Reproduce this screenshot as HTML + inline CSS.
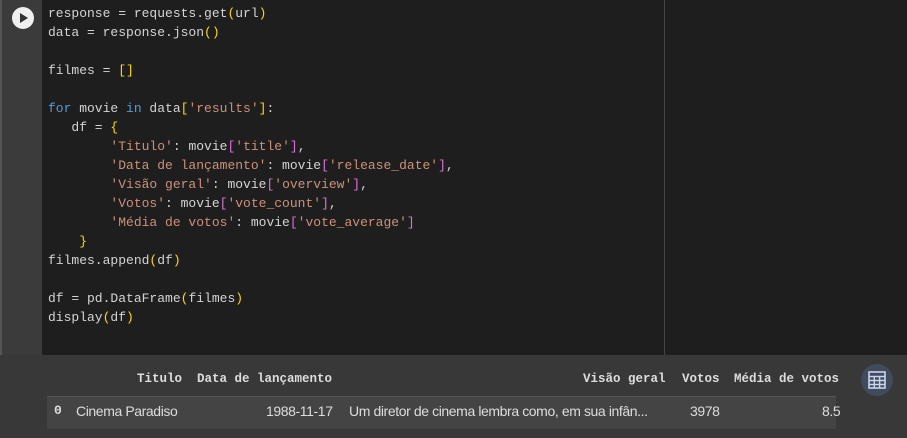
<!DOCTYPE html>
<html><head><meta charset="utf-8"><style>
body{margin:0;width:907px;height:438px;background:#383838;overflow:hidden;position:relative;font-family:"Liberation Mono",monospace}
.cell{position:absolute;left:0;top:0;width:907px;height:355px;background:#1e1e1e}
.gut{position:absolute;left:0;top:0;width:42px;height:355px;background:#3b3b3b;border-left:2px solid #555;box-sizing:border-box}
.run{position:absolute;left:10px;top:7px;width:22px;height:22px;border-radius:50%;background:#f0f0f0}
.run:after{content:"";position:absolute;left:8px;top:6px;border-left:8px solid #333;border-top:5px solid transparent;border-bottom:5px solid transparent}
.vl{position:absolute;left:664px;top:0;width:1px;height:355px;background:#444}
pre{position:absolute;left:48px;top:4px;margin:0;font-size:13px;line-height:19px;color:#d4d4d4;font-family:"Liberation Mono",monospace}
.k{color:#569cd6}.s{color:#ce9178}.y{color:#ffd700}.m{color:#da70d6}
.t{position:absolute;font-size:13px;color:#ddd;white-space:nowrap}
.h{font-weight:bold;top:372px;font-family:"Liberation Mono",monospace;font-size:12.5px;color:#ddd}
.row{position:absolute;left:47px;top:396px;width:789px;height:32px;background:#444;border-top:1px solid #555}
.d{top:403px;font-family:"Liberation Sans",sans-serif;font-size:14px;letter-spacing:-0.4px}
.ic{position:absolute;left:861px;top:364px;width:32px;height:32px;border-radius:50%;background:#414b5b}
</style></head><body>
<div class="cell"><div class="gut"><div class="run"></div></div><div class="vl"></div>
<pre>response = requests.get<span class="y">(</span>url<span class="y">)</span>
data = response.json<span class="y">()</span>

filmes = <span class="y">[]</span>

<span class="k">for</span> movie <span class="k">in</span> data<span class="y">[</span><span class="s">'results'</span><span class="y">]</span>:
   df = <span class="y">{</span>
        <span class="s">'Titulo'</span>: movie<span class="m">[</span><span class="s">'title'</span><span class="m">]</span>,
        <span class="s">'Data de lançamento'</span>: movie<span class="m">[</span><span class="s">'release_date'</span><span class="m">]</span>,
        <span class="s">'Visão geral'</span>: movie<span class="m">[</span><span class="s">'overview'</span><span class="m">]</span>,
        <span class="s">'Votos'</span>: movie<span class="m">[</span><span class="s">'vote_count'</span><span class="m">]</span>,
        <span class="s">'Média de votos'</span>: movie<span class="m">[</span><span class="s">'vote_average'</span><span class="m">]</span>
    <span class="y">}</span>
filmes.append<span class="y">(</span>df<span class="y">)</span>

df = pd.DataFrame<span class="y">(</span>filmes<span class="y">)</span>
display<span class="y">(</span>df<span class="y">)</span></pre></div>
<div class="t h" style="left:137px">Titulo</div>
<div class="t h" style="left:197px">Data de lançamento</div>
<div class="t h" style="left:583px">Visão geral</div>
<div class="t h" style="left:682px">Votos</div>
<div class="t h" style="left:734px">Média de votos</div>
<div class="row"></div>
<div class="t d" style="left:54px;font-weight:bold;font-family:'Liberation Mono',monospace;font-size:13px">0</div>
<div class="t d" style="left:76px">Cinema Paradiso</div>
<div class="t d" style="left:266px">1988-11-17</div>
<div class="t d" style="left:349px">Um diretor de cinema lembra como, em sua infân...</div>
<div class="t d" style="left:690px">3978</div>
<div class="t d" style="left:822px">8.5</div>
<div class="ic"><svg width="32" height="32"><rect x="8" y="8" width="16" height="16" fill="none" stroke="#c8d4f0" stroke-width="1.6"/><path d="M8 12.5H24M8 16.5H24M8 20.5H24M13.3 12.5V24M18.6 12.5V24" stroke="#c8d4f0" stroke-width="1.4"/></svg></div>
</body></html>
